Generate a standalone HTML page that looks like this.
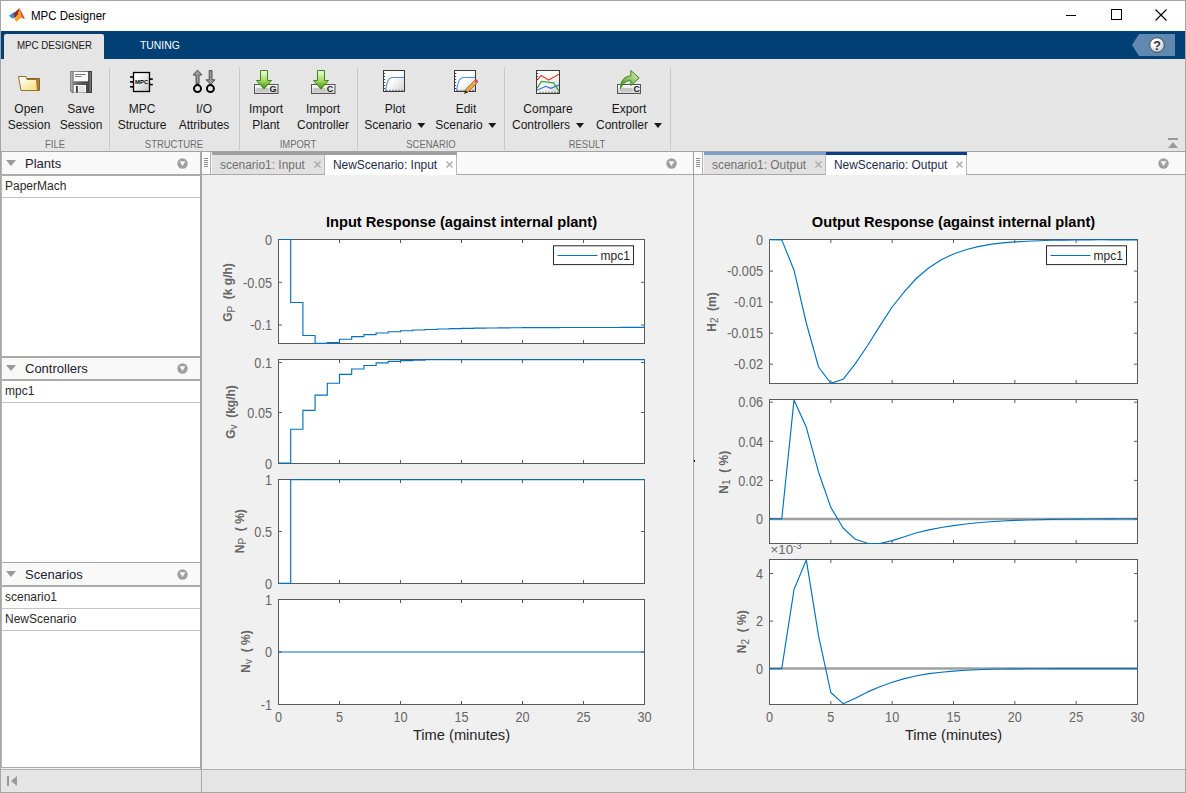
<!DOCTYPE html><html><head><meta charset="utf-8"><style>
*{margin:0;padding:0;box-sizing:border-box}
html,body{width:1186px;height:793px;overflow:hidden;background:#f0f0f0;font-family:"Liberation Sans",sans-serif;position:relative}
.a{position:absolute}
.t{position:absolute;white-space:nowrap;line-height:1}
</style></head><body>

<div class="a" style="left:0;top:0;width:1186px;height:793px;border:1px solid #a6a6a6"></div>
<div class="a" style="left:1px;top:1px;width:1184px;height:30px;background:#fff"></div>
<svg class="a" style="left:6px;top:5px" width="22" height="20" viewBox="6 5 22 20">
<defs><linearGradient id="mo" x1="0" y1="0" x2="0" y2="1"><stop offset="0" stop-color="#e88a30"/><stop offset="1" stop-color="#f5b030"/></linearGradient></defs>
<polygon points="9,15.8 13.5,12.6 17,12.3 14.6,17.6 12,18.4" fill="#3a8ad2"/>
<polygon points="13.8,13.2 19.6,7.9 18.2,14.5 14.6,18.4" fill="#9a2a18"/>
<polygon points="19.6,7.9 18.2,14.5 14.3,18.3 16.1,22 21.6,17.4" fill="url(#mo)"/>
<polygon points="19.6,7.9 21.6,17.4 25,19.3 23,15" fill="#d4481e"/>
</svg>
<div class="t" style="left:30.5px;top:9.7px;font-size:12px;color:#000;transform-origin:0 0;transform:scaleX(0.96)">MPC Designer</div>
<div class="a" style="left:1066px;top:15px;width:10px;height:1px;background:#000"></div>
<div class="a" style="left:1111px;top:9px;width:11px;height:11px;border:1px solid #000"></div>
<svg class="a" style="left:1155px;top:9px" width="12" height="12" viewBox="0 0 12 12"><path d="M0.5,0.5L11.5,11.5M11.5,0.5L0.5,11.5" stroke="#000" stroke-width="1.1"/></svg>
<div class="a" style="left:1px;top:31px;width:1184px;height:28px;background:#023f74"></div>
<div class="a" style="left:4px;top:34px;width:100px;height:25px;background:#e5e5e5;border-radius:2px 2px 0 0"></div>
<div class="t" style="left:16.5px;top:39.5px;font-size:10.8px;color:#1a1a1a;transform-origin:0 0;transform:scaleX(0.9)">MPC DESIGNER</div>
<div class="t" style="left:140px;top:39.5px;font-size:10.8px;color:#fff;transform-origin:0 0;transform:scaleX(0.96)">TUNING</div>
<svg class="a" style="left:1130px;top:33px" width="48" height="25" viewBox="1130 33 48 25">
<defs><radialGradient id="hq" cx="0.4" cy="0.35" r="0.7"><stop offset="0.3" stop-color="#ffffff"/><stop offset="1" stop-color="#b8c0c8"/></radialGradient></defs>
<polygon points="1132,45 1139,34 1175,34 1175,56 1139,56" fill="#6189b0"/>
<circle cx="1157" cy="45" r="7.3" fill="url(#hq)" stroke="#2a3a50" stroke-width="0.8"/>
<text x="1157" y="49.6" font-family="Liberation Sans" font-weight="bold" font-size="12.5" text-anchor="middle" fill="#2a3040">?</text>
</svg>
<div class="a" style="left:1px;top:59px;width:1184px;height:92px;background:#e5e5e5"></div>
<div class="a" style="left:1px;top:151px;width:1184px;height:1px;background:#a2a2a2"></div>
<div class="a" style="left:109px;top:67px;width:1px;height:83px;background:#c8c8c8"></div>
<div class="a" style="left:239px;top:67px;width:1px;height:83px;background:#c8c8c8"></div>
<div class="a" style="left:357px;top:67px;width:1px;height:83px;background:#c8c8c8"></div>
<div class="a" style="left:504px;top:67px;width:1px;height:83px;background:#c8c8c8"></div>
<div class="a" style="left:670px;top:67px;width:1px;height:83px;background:#c8c8c8"></div>
<div class="t" style="left:29px;top:103px;width:0;font-size:12px;color:#1a1a1a"><span style="position:absolute;left:0;transform:translateX(-50%) scaleX(1)">Open</span></div>
<div class="t" style="left:29px;top:119px;width:0;font-size:12px;color:#1a1a1a"><span style="position:absolute;left:0;transform:translateX(-50%) scaleX(1)">Session</span></div>
<div class="t" style="left:81px;top:103px;width:0;font-size:12px;color:#1a1a1a"><span style="position:absolute;left:0;transform:translateX(-50%) scaleX(1)">Save</span></div>
<div class="t" style="left:81px;top:119px;width:0;font-size:12px;color:#1a1a1a"><span style="position:absolute;left:0;transform:translateX(-50%) scaleX(1)">Session</span></div>
<div class="t" style="left:142px;top:103px;width:0;font-size:12px;color:#1a1a1a"><span style="position:absolute;left:0;transform:translateX(-50%) scaleX(1)">MPC</span></div>
<div class="t" style="left:142px;top:119px;width:0;font-size:12px;color:#1a1a1a"><span style="position:absolute;left:0;transform:translateX(-50%) scaleX(1)">Structure</span></div>
<div class="t" style="left:204px;top:103px;width:0;font-size:12px;color:#1a1a1a"><span style="position:absolute;left:0;transform:translateX(-50%) scaleX(1)">I/O</span></div>
<div class="t" style="left:204px;top:119px;width:0;font-size:12px;color:#1a1a1a"><span style="position:absolute;left:0;transform:translateX(-50%) scaleX(1)">Attributes</span></div>
<div class="t" style="left:266px;top:103px;width:0;font-size:12px;color:#1a1a1a"><span style="position:absolute;left:0;transform:translateX(-50%) scaleX(1)">Import</span></div>
<div class="t" style="left:266px;top:119px;width:0;font-size:12px;color:#1a1a1a"><span style="position:absolute;left:0;transform:translateX(-50%) scaleX(1)">Plant</span></div>
<div class="t" style="left:323px;top:103px;width:0;font-size:12px;color:#1a1a1a"><span style="position:absolute;left:0;transform:translateX(-50%) scaleX(1)">Import</span></div>
<div class="t" style="left:323px;top:119px;width:0;font-size:12px;color:#1a1a1a"><span style="position:absolute;left:0;transform:translateX(-50%) scaleX(1)">Controller</span></div>
<div class="t" style="left:395px;top:103px;width:0;font-size:12px;color:#1a1a1a"><span style="position:absolute;left:0;transform:translateX(-50%) scaleX(1)">Plot</span></div>
<div class="t" style="left:395px;top:119px;width:0;font-size:12px;color:#1a1a1a"><span style="position:absolute;left:0;transform:translateX(-50%) scaleX(1)">Scenario<span style="display:inline-block;width:0;height:0;border-left:4.5px solid transparent;border-right:4.5px solid transparent;border-top:5px solid #1a1a1a;vertical-align:1px;margin-left:6px"></span></span></div>
<div class="t" style="left:466px;top:103px;width:0;font-size:12px;color:#1a1a1a"><span style="position:absolute;left:0;transform:translateX(-50%) scaleX(1)">Edit</span></div>
<div class="t" style="left:466px;top:119px;width:0;font-size:12px;color:#1a1a1a"><span style="position:absolute;left:0;transform:translateX(-50%) scaleX(1)">Scenario<span style="display:inline-block;width:0;height:0;border-left:4.5px solid transparent;border-right:4.5px solid transparent;border-top:5px solid #1a1a1a;vertical-align:1px;margin-left:6px"></span></span></div>
<div class="t" style="left:548px;top:103px;width:0;font-size:12px;color:#1a1a1a"><span style="position:absolute;left:0;transform:translateX(-50%) scaleX(1)">Compare</span></div>
<div class="t" style="left:548px;top:119px;width:0;font-size:12px;color:#1a1a1a"><span style="position:absolute;left:0;transform:translateX(-50%) scaleX(1)">Controllers<span style="display:inline-block;width:0;height:0;border-left:4.5px solid transparent;border-right:4.5px solid transparent;border-top:5px solid #1a1a1a;vertical-align:1px;margin-left:6px"></span></span></div>
<div class="t" style="left:629px;top:103px;width:0;font-size:12px;color:#1a1a1a"><span style="position:absolute;left:0;transform:translateX(-50%) scaleX(1)">Export</span></div>
<div class="t" style="left:629px;top:119px;width:0;font-size:12px;color:#1a1a1a"><span style="position:absolute;left:0;transform:translateX(-50%) scaleX(1)">Controller<span style="display:inline-block;width:0;height:0;border-left:4.5px solid transparent;border-right:4.5px solid transparent;border-top:5px solid #1a1a1a;vertical-align:1px;margin-left:6px"></span></span></div>
<div class="t" style="left:55px;top:138.7px;width:0;font-size:10.5px;color:#6e6e6e"><span style="position:absolute;left:0;transform:translateX(-50%) scaleX(0.9)">FILE</span></div>
<div class="t" style="left:174px;top:138.7px;width:0;font-size:10.5px;color:#6e6e6e"><span style="position:absolute;left:0;transform:translateX(-50%) scaleX(0.9)">STRUCTURE</span></div>
<div class="t" style="left:298px;top:138.7px;width:0;font-size:10.5px;color:#6e6e6e"><span style="position:absolute;left:0;transform:translateX(-50%) scaleX(0.9)">IMPORT</span></div>
<div class="t" style="left:431px;top:138.7px;width:0;font-size:10.5px;color:#6e6e6e"><span style="position:absolute;left:0;transform:translateX(-50%) scaleX(0.9)">SCENARIO</span></div>
<div class="t" style="left:587px;top:138.7px;width:0;font-size:10.5px;color:#6e6e6e"><span style="position:absolute;left:0;transform:translateX(-50%) scaleX(0.9)">RESULT</span></div>
<svg class="a" style="left:17px;top:75px" width="24" height="17" viewBox="17 75 24 17">
<defs><linearGradient id="fg" x1="0" y1="0" x2="1" y2="1"><stop offset="0.15" stop-color="#ffffff"/><stop offset="1" stop-color="#f2dc6a"/></linearGradient>
<linearGradient id="fb" x1="0" y1="0" x2="1" y2="0"><stop offset="0" stop-color="#e0c090"/><stop offset="1" stop-color="#a07840"/></linearGradient></defs>
<path d="M26.5,78.5 H39.5 V90.5 H27z" fill="url(#fb)" stroke="#8a6424" stroke-width="1"/>
<path d="M18.5,76.5 H26 L27,79.5 H36.5 L37.5,90.5 H21z" fill="url(#fg)" stroke="#9a7020" stroke-width="1"/>
</svg>
<svg class="a" style="left:70px;top:71px" width="22" height="22" viewBox="70 71 22 22">
<defs><linearGradient id="fl" x1="0" y1="0" x2="1" y2="0"><stop offset="0" stop-color="#8a8a8a"/><stop offset="0.5" stop-color="#5a5a5a"/><stop offset="1" stop-color="#3a3a3a"/></linearGradient></defs>
<path d="M70,71 H92 V93 H72 L70,91z" fill="url(#fl)"/>
<rect x="71" y="72" width="1.5" height="19" fill="#a8a8a8"/><rect x="89.5" y="72" width="1.5" height="20" fill="#777"/>
<rect x="73.7" y="71.8" width="14.4" height="9.5" fill="#fafafa"/>
<rect x="75" y="74" width="10.5" height="0.9" fill="#666"/><rect x="75" y="76" width="6.5" height="0.9" fill="#666"/>
<rect x="73.7" y="85" width="12.3" height="7.5" fill="#fafafa"/><rect x="79" y="86" width="6" height="6" fill="#e4e4e4"/>
<rect x="76" y="86" width="1.8" height="6.5" fill="#333"/>
</svg>
<svg class="a" style="left:128px;top:70px" width="27" height="24" viewBox="128 70 27 24">
<defs><linearGradient id="cg" x1="0" y1="0" x2="1" y2="1"><stop offset="0.2" stop-color="#fff"/><stop offset="1" stop-color="#c4c4c4"/></linearGradient></defs>
<rect x="133.5" y="72.5" width="16" height="19" fill="url(#cg)" stroke="#000" stroke-width="1.3"/>
<rect x="130" y="76.2" width="3.2" height="1.6" fill="#000"/><rect x="130" y="81.1" width="3.2" height="1.6" fill="#000"/><rect x="130" y="86" width="3.2" height="1.6" fill="#000"/>
<rect x="149.8" y="78.3" width="3" height="1.6" fill="#000"/><rect x="149.8" y="83.8" width="3" height="1.6" fill="#000"/>
<text x="135" y="84.2" font-family="Liberation Sans" font-weight="bold" font-size="5.6" textLength="13.2" lengthAdjust="spacingAndGlyphs" fill="#000">MPC</text>
</svg>
<svg class="a" style="left:190px;top:68px" width="28" height="27" viewBox="190 68 28 27">
<path d="M196,83.5 V75 H193 L197.5,70 L202,75 H199 V83.5z" fill="#9a9a9a" stroke="#444" stroke-width="0.9"/>
<path d="M209.2,70.5 H212 V79.8 H215 L210.6,84.4 L206.2,79.8 H209.2z" fill="#9a9a9a" stroke="#444" stroke-width="0.9"/>
<circle cx="197.5" cy="88.6" r="3.5" fill="none" stroke="#000" stroke-width="2"/>
<circle cx="210.4" cy="88.6" r="3.5" fill="none" stroke="#000" stroke-width="2"/>
</svg>
<svg class="a" style="left:254px;top:70px" width="25" height="25" viewBox="0 0 25 25">
<defs><linearGradient id="agG" x1="0" y1="0" x2="0" y2="1"><stop offset="0" stop-color="#f4fce0"/><stop offset=".55" stop-color="#a8d860"/><stop offset="1" stop-color="#3a8a18"/></linearGradient>
<linearGradient id="bgG" x1="0" y1="0" x2="0" y2="1"><stop offset="0" stop-color="#fff"/><stop offset="1" stop-color="#ccc"/></linearGradient></defs>
<rect x="0.5" y="14.5" width="23.5" height="9" fill="url(#bgG)" stroke="#555" stroke-width="1"/>
<rect x="2.5" y="18" width="12" height="3.5" fill="#c4c4c4"/>
<path d="M6.5,0.5 h7 v10 h4 l-7.5,8.5 l-7.5,-8.5 h4z" fill="url(#agG)" stroke="#3a8a18" stroke-width="1"/>
<text x="19" y="22.3" font-family="Liberation Sans" font-weight="bold" font-size="9" text-anchor="middle" fill="#1a1a1a">G</text>
</svg>
<svg class="a" style="left:311px;top:70px" width="25" height="25" viewBox="0 0 25 25">
<defs><linearGradient id="agC" x1="0" y1="0" x2="0" y2="1"><stop offset="0" stop-color="#f4fce0"/><stop offset=".55" stop-color="#a8d860"/><stop offset="1" stop-color="#3a8a18"/></linearGradient>
<linearGradient id="bgC" x1="0" y1="0" x2="0" y2="1"><stop offset="0" stop-color="#fff"/><stop offset="1" stop-color="#ccc"/></linearGradient></defs>
<rect x="0.5" y="14.5" width="23.5" height="9" fill="url(#bgC)" stroke="#555" stroke-width="1"/>
<rect x="2.5" y="18" width="12" height="3.5" fill="#c4c4c4"/>
<path d="M6.5,0.5 h7 v10 h4 l-7.5,8.5 l-7.5,-8.5 h4z" fill="url(#agC)" stroke="#3a8a18" stroke-width="1"/>
<text x="19" y="22.3" font-family="Liberation Sans" font-weight="bold" font-size="9" text-anchor="middle" fill="#1a1a1a">C</text>
</svg>
<svg class="a" style="left:382px;top:70px" width="26" height="24" viewBox="0 0 26 24">
<defs><linearGradient id="pg382" x1="0" y1="0" x2="1" y2="1"><stop offset=".45" stop-color="#fff"/><stop offset="1" stop-color="#cfcfcf"/></linearGradient></defs>
<rect x="1.5" y="0.5" width="21" height="21" fill="url(#pg382)" stroke="#3a3a3a" stroke-width="1"/>
<path d="M3.5,21 C5,12 6,7.5 11,7.5 L22,7.5" fill="none" stroke="#4a90d8" stroke-width="1.1"/>
<path d="M2,3.5h1.2M2,6.5h1.2M2,9.5h1.2M2,12.5h1.2M2,15.5h1.2M2,18.5h1.2M5,21v-1.2M8,21v-1.2M11,21v-1.2M14,21v-1.2M17,21v-1.2M20,21v-1.2" stroke="#333" stroke-width="0.9"/></svg>
<svg class="a" style="left:453px;top:70px" width="26" height="24" viewBox="0 0 26 24">
<defs><linearGradient id="pg453" x1="0" y1="0" x2="1" y2="1"><stop offset=".45" stop-color="#fff"/><stop offset="1" stop-color="#cfcfcf"/></linearGradient></defs>
<rect x="1.5" y="0.5" width="21" height="21" fill="url(#pg453)" stroke="#3a3a3a" stroke-width="1"/>
<path d="M3.5,21 C5,12 6,7.5 11,7.5 L22,7.5" fill="none" stroke="#4a90d8" stroke-width="1.1"/>
<path d="M2,3.5h1.2M2,6.5h1.2M2,9.5h1.2M2,12.5h1.2M2,15.5h1.2M2,18.5h1.2M5,21v-1.2M8,21v-1.2M11,21v-1.2M14,21v-1.2M17,21v-1.2M20,21v-1.2" stroke="#333" stroke-width="0.9"/><path d="M11.5,23.5 L13,19 L21.5,10.5 L24,13 L15.5,21.5z" fill="#e8a848" stroke="#8a5a20" stroke-width="0.7"/><path d="M21.5,10.5 L23,9 L25.5,11.5 L24,13z" fill="#d84078"/><path d="M11.5,23.5 L12.6,20.2 L14.8,22.4z" fill="#222"/></svg>
<svg class="a" style="left:534px;top:68px" width="28" height="28" viewBox="534 68 28 28">
<defs><linearGradient id="cmp" x1="0" y1="0" x2="1" y2="1"><stop offset=".45" stop-color="#fff"/><stop offset="1" stop-color="#cfcfcf"/></linearGradient></defs>
<rect x="536.5" y="70.5" width="23" height="23" fill="url(#cmp)" stroke="#3a3a3a" stroke-width="1"/>
<polyline points="537,80.1 541.2,75.6 548.6,80.1 559,74.3" fill="none" stroke="#e83a2a" stroke-width="1.2"/>
<polyline points="537,88.3 541.4,81.5 553.5,82.8 559,91" fill="none" stroke="#30a040" stroke-width="1.2"/>
<polyline points="537,90.3 545.8,86.3 550.8,88.3 559,85" fill="none" stroke="#2f6fd0" stroke-width="1.2"/>
<path d="M537,73.5h1.2M537,76.5h1.2M537,79.5h1.2M540,93v-1.2M543,93v-1.2M546,93v-1.2M549,93v-1.2M552,93v-1.2M555,93v-1.2M558,93v-1.2" stroke="#333" stroke-width="0.9"/>
</svg>
<svg class="a" style="left:615px;top:68px" width="28" height="28" viewBox="615 68 28 28">
<defs><linearGradient id="eg" x1="0" y1="0" x2="0" y2="1"><stop offset="0" stop-color="#fff"/><stop offset="1" stop-color="#cfcfcf"/></linearGradient>
<linearGradient id="eag" x1="1" y1="0" x2="0" y2="1"><stop offset="0" stop-color="#e8f8c0"/><stop offset="1" stop-color="#3a8a18"/></linearGradient></defs>
<rect x="617.5" y="84.5" width="23" height="9" fill="url(#eg)" stroke="#555" stroke-width="1"/>
<rect x="619.5" y="88" width="13" height="3.5" fill="#c4c4c4"/>
<path d="M620.5,88.5 C620.5,80 625,76 630.8,76 V70.5 L639.2,78 L630.8,85.5 V80.5 C626.5,80.5 623,83 620.5,88.5z" fill="url(#eag)" stroke="#3a8a18" stroke-width="1"/>
<text x="636.6" y="92" font-family="Liberation Sans" font-weight="bold" font-size="8.8" text-anchor="middle" fill="#1a1a1a">C</text>
</svg>
<div class="a" style="left:1168px;top:138px;width:10px;height:1.5px;background:#999"></div>
<svg class="a" style="left:1168px;top:141px" width="10" height="8"><polygon points="0,7 5,1 10,7" fill="#999"/></svg>
<div class="a" style="left:1px;top:152px;width:200px;height:22px;background:#f9f9f9"></div>
<svg class="a" style="left:6px;top:159.5px" width="10" height="7"><polygon points="0,0 10,0 5,6" fill="#999"/></svg>
<div class="t" style="left:25px;top:156.5px;font-size:13px;color:#1c2230">Plants</div>
<svg class="a" style="left:177px;top:157.5px" width="11" height="11" viewBox="0 0 11 11"><circle cx="5.5" cy="5.5" r="5.2" fill="#a0a0a0"/><polygon points="2.6,3.3 8.4,3.3 5.5,8" fill="#f9f9f9"/></svg>
<div class="a" style="left:1px;top:174px;width:200px;height:2px;background:#ababab"></div>
<div class="a" style="left:1px;top:176px;width:199px;height:180px;background:#fff"></div>
<div class="t" style="left:5px;top:180px;font-size:12px;color:#2a2a2a">PaperMach</div>
<div class="a" style="left:1px;top:197px;width:199px;height:1px;background:#c4c4c4"></div>
<div class="a" style="left:1px;top:356px;width:200px;height:2px;background:#a8a8a8"></div>
<div class="a" style="left:1px;top:358px;width:200px;height:21px;background:#f9f9f9"></div>
<svg class="a" style="left:6px;top:365px" width="10" height="7"><polygon points="0,0 10,0 5,6" fill="#999"/></svg>
<div class="t" style="left:25px;top:362px;font-size:13px;color:#1c2230">Controllers</div>
<svg class="a" style="left:177px;top:363px" width="11" height="11" viewBox="0 0 11 11"><circle cx="5.5" cy="5.5" r="5.2" fill="#a0a0a0"/><polygon points="2.6,3.3 8.4,3.3 5.5,8" fill="#f9f9f9"/></svg>
<div class="a" style="left:1px;top:379px;width:200px;height:2px;background:#ababab"></div>
<div class="a" style="left:1px;top:381px;width:199px;height:181px;background:#fff"></div>
<div class="t" style="left:5px;top:385px;font-size:12px;color:#2a2a2a">mpc1</div>
<div class="a" style="left:1px;top:402px;width:199px;height:1px;background:#c4c4c4"></div>
<div class="a" style="left:1px;top:562px;width:200px;height:1px;background:#a8a8a8"></div>
<div class="a" style="left:1px;top:563px;width:200px;height:22px;background:#f9f9f9"></div>
<svg class="a" style="left:6px;top:570.5px" width="10" height="7"><polygon points="0,0 10,0 5,6" fill="#999"/></svg>
<div class="t" style="left:25px;top:567.5px;font-size:13px;color:#1c2230">Scenarios</div>
<svg class="a" style="left:177px;top:568.5px" width="11" height="11" viewBox="0 0 11 11"><circle cx="5.5" cy="5.5" r="5.2" fill="#a0a0a0"/><polygon points="2.6,3.3 8.4,3.3 5.5,8" fill="#f9f9f9"/></svg>
<div class="a" style="left:1px;top:585px;width:200px;height:2px;background:#ababab"></div>
<div class="a" style="left:1px;top:587px;width:199px;height:180px;background:#fff"></div>
<div class="t" style="left:5px;top:591px;font-size:12px;color:#2a2a2a">scenario1</div>
<div class="a" style="left:1px;top:608px;width:199px;height:1px;background:#c4c4c4"></div>
<div class="t" style="left:5px;top:613px;font-size:12px;color:#2a2a2a">NewScenario</div>
<div class="a" style="left:1px;top:630px;width:199px;height:1px;background:#c4c4c4"></div>
<div class="a" style="left:1px;top:767px;width:200px;height:1px;background:#a8a8a8"></div>
<div class="a" style="left:200px;top:152px;width:2px;height:617px;background:#a8a8a8"></div>
<div class="a" style="left:1px;top:152px;width:1px;height:616px;background:#b4b4b4"></div>
<div class="a" style="left:1px;top:769px;width:1184px;height:1px;background:#b0b0b0"></div>
<div class="a" style="left:1px;top:770px;width:1184px;height:22px;background:#e5e5e5"></div>
<div class="a" style="left:201px;top:770px;width:1px;height:22px;background:#a8a8a8"></div>
<svg class="a" style="left:7px;top:776px" width="11" height="10"><rect x="0" y="0" width="2" height="10" fill="#999"/><polygon points="4,5 10,0 10,10" fill="#999"/></svg>
<div class="a" style="left:202px;top:152px;width:491px;height:22px;background:#f9f9f9"></div>
<div class="a" style="left:202px;top:174px;width:491px;height:1px;background:#a8a8a8"></div>
<div class="a" style="left:202px;top:152px;width:9px;height:22px;background:#fcfcfc;border-right:1px solid #b0b0b0"></div>
<div class="a" style="left:204px;top:158px;width:4px;height:1px;background:#8a8a8a"></div>
<div class="a" style="left:204px;top:160px;width:4px;height:1px;background:#8a8a8a"></div>
<div class="a" style="left:204px;top:162px;width:4px;height:1px;background:#8a8a8a"></div>
<div class="a" style="left:204px;top:164px;width:4px;height:1px;background:#8a8a8a"></div>
<div class="a" style="left:204px;top:166px;width:4px;height:1px;background:#8a8a8a"></div>
<div class="a" style="left:212px;top:152px;width:113px;height:22px;background:#e1e1e1;border-right:1px solid #b8b8b8"></div>
<div class="a" style="left:212px;top:152px;width:113px;height:3px;background:#a0a0a0"></div>
<div class="t" style="left:220px;top:159px;font-size:12.3px;color:#707070;transform-origin:0 0;transform:scaleX(0.97)">scenario1: Input</div>
<svg class="a" style="left:314px;top:160.5px" width="7" height="7"><path d="M0.5,0.5L6.5,6.5M6.5,0.5L0.5,6.5" stroke="#a4a4a4" stroke-width="1.15"/></svg>
<div class="a" style="left:325px;top:152px;width:132px;height:23px;background:#fff;border-right:1px solid #b8b8b8"></div>
<div class="a" style="left:325px;top:152px;width:132px;height:3px;background:#a0a0a0"></div>
<div class="t" style="left:333px;top:159px;font-size:12.3px;color:#1d2a4a;transform-origin:0 0;transform:scaleX(0.97)">NewScenario: Input</div>
<svg class="a" style="left:446px;top:160.5px" width="7" height="7"><path d="M0.5,0.5L6.5,6.5M6.5,0.5L0.5,6.5" stroke="#a4a4a4" stroke-width="1.15"/></svg>
<svg class="a" style="left:666px;top:158px" width="11" height="11" viewBox="0 0 11 11"><circle cx="5.5" cy="5.5" r="5.2" fill="#a0a0a0"/><polygon points="2.6,3.3 8.4,3.3 5.5,8" fill="#f9f9f9"/></svg>
<div class="a" style="left:692px;top:175px;width:1px;height:594px;background:#fafafa"></div>
<div class="a" style="left:693px;top:152px;width:1px;height:617px;background:#a0a0a0"></div>
<div class="a" style="left:694px;top:460px;width:1px;height:2px;background:#000"></div>
<div class="a" style="left:694px;top:152px;width:491px;height:22px;background:#f9f9f9"></div>
<div class="a" style="left:694px;top:174px;width:491px;height:1px;background:#a8a8a8"></div>
<div class="a" style="left:694px;top:152px;width:9px;height:22px;background:#fcfcfc;border-right:1px solid #b0b0b0"></div>
<div class="a" style="left:696px;top:158px;width:4px;height:1px;background:#8a8a8a"></div>
<div class="a" style="left:696px;top:160px;width:4px;height:1px;background:#8a8a8a"></div>
<div class="a" style="left:696px;top:162px;width:4px;height:1px;background:#8a8a8a"></div>
<div class="a" style="left:696px;top:164px;width:4px;height:1px;background:#8a8a8a"></div>
<div class="a" style="left:696px;top:166px;width:4px;height:1px;background:#8a8a8a"></div>
<div class="a" style="left:704px;top:152px;width:122px;height:22px;background:#e1e1e1;border-right:1px solid #b8b8b8"></div>
<div class="a" style="left:704px;top:152px;width:122px;height:3px;background:#7a9cc6"></div>
<div class="t" style="left:712px;top:159px;font-size:12.3px;color:#707070;transform-origin:0 0;transform:scaleX(0.97)">scenario1: Output</div>
<svg class="a" style="left:815px;top:160.5px" width="7" height="7"><path d="M0.5,0.5L6.5,6.5M6.5,0.5L0.5,6.5" stroke="#a4a4a4" stroke-width="1.15"/></svg>
<div class="a" style="left:826px;top:152px;width:141px;height:23px;background:#fff;border-right:1px solid #b8b8b8"></div>
<div class="a" style="left:826px;top:152px;width:141px;height:3px;background:#0a3d8a"></div>
<div class="t" style="left:834px;top:159px;font-size:12.3px;color:#1d2a4a;transform-origin:0 0;transform:scaleX(0.97)">NewScenario: Output</div>
<svg class="a" style="left:956px;top:160.5px" width="7" height="7"><path d="M0.5,0.5L6.5,6.5M6.5,0.5L0.5,6.5" stroke="#a4a4a4" stroke-width="1.15"/></svg>
<svg class="a" style="left:1158px;top:158px" width="11" height="11" viewBox="0 0 11 11"><circle cx="5.5" cy="5.5" r="5.2" fill="#a0a0a0"/><polygon points="2.6,3.3 8.4,3.3 5.5,8" fill="#f9f9f9"/></svg>
<svg class="a" style="left:0;top:0" width="1186" height="793" viewBox="0 0 1186 793">
<defs><clipPath id="cA1"><rect x="278.5" y="239.5" width="366" height="104"/></clipPath></defs>
<g font-family="Liberation Sans, sans-serif">
<rect x="278.5" y="239.5" width="366" height="104" fill="#fff"/>
<path d="M278.5,239.5v3.5M278.5,343.5v-3.5M339.5,239.5v3.5M339.5,343.5v-3.5M400.5,239.5v3.5M400.5,343.5v-3.5M461.5,239.5v3.5M461.5,343.5v-3.5M522.5,239.5v3.5M522.5,343.5v-3.5M583.5,239.5v3.5M583.5,343.5v-3.5M644.5,239.5v3.5M644.5,343.5v-3.5M278.5,239.5h3.5M644.5,239.5h-3.5M278.5,282.3h3.5M644.5,282.3h-3.5M278.5,325h3.5M644.5,325h-3.5" stroke="#5a5a5a" stroke-width="1" fill="none"/>
<rect x="278.5" y="239.5" width="366" height="104" fill="none" stroke="#5a5a5a" stroke-width="1"/>
<polyline points="279,239.5 290.7,239.5 290.7,302.5 302.9,302.5 302.9,335.5 315.1,335.5 315.1,343.3 327.3,343.3 327.3,342.6 339.5,342.6 339.5,339.21 351.7,339.21 351.7,336.6 363.9,336.6 363.9,334.56 376.1,334.56 376.1,332.98 388.3,332.98 388.3,331.74 400.5,331.74 400.5,330.78 412.7,330.78 412.7,330.03 424.9,330.03 424.9,329.45 437.1,329.45 437.1,329 449.3,329 449.3,328.64 461.5,328.64 461.5,328.37 473.7,328.37 473.7,328.15 485.9,328.15 485.9,327.99 498.1,327.99 498.1,327.86 510.3,327.86 510.3,327.76 522.5,327.76 522.5,327.68 534.7,327.68 534.7,327.62 546.9,327.62 546.9,327.57 559.1,327.57 559.1,327.53 571.3,327.53 571.3,327.5 583.5,327.5 583.5,327.48 595.7,327.48 595.7,327.46 607.9,327.46 607.9,327.45 620.1,327.45 620.1,327.44 632.3,327.44 632.3,327.43 644.5,327.43" fill="none" stroke="#0072bd" stroke-width="1.15"/>
<text transform="translate(272,244.7) scale(0.92,1)" text-anchor="end" font-size="13.8" fill="#666666">0</text>
<text transform="translate(272,287.5) scale(0.92,1)" text-anchor="end" font-size="13.8" fill="#666666">-0.05</text>
<text transform="translate(272,330.2) scale(0.92,1)" text-anchor="end" font-size="13.8" fill="#666666">-0.1</text>
<text transform="translate(232,292.5) rotate(-90)" text-anchor="middle" font-size="12" font-weight="bold" fill="#666666" xml:space="preserve">G<tspan font-weight="normal" font-size="10" dy="2.5">P</tspan><tspan dy="-2.5">  (k g/h)</tspan></text>
<rect x="278.5" y="359.5" width="366" height="104" fill="#fff"/>
<path d="M278.5,359.5v3.5M278.5,463.5v-3.5M339.5,359.5v3.5M339.5,463.5v-3.5M400.5,359.5v3.5M400.5,463.5v-3.5M461.5,359.5v3.5M461.5,463.5v-3.5M522.5,359.5v3.5M522.5,463.5v-3.5M583.5,359.5v3.5M583.5,463.5v-3.5M644.5,359.5v3.5M644.5,463.5v-3.5M278.5,362.6h3.5M644.5,362.6h-3.5M278.5,412.5h3.5M644.5,412.5h-3.5M278.5,463.5h3.5M644.5,463.5h-3.5" stroke="#5a5a5a" stroke-width="1" fill="none"/>
<rect x="278.5" y="359.5" width="366" height="104" fill="none" stroke="#5a5a5a" stroke-width="1"/>
<polyline points="278.5,463.1 290.7,463.1 290.7,429.2 302.9,429.2 302.9,410.3 315.1,410.3 315.1,395.1 327.3,395.1 327.3,383.2 339.5,383.2 339.5,374.4 351.7,374.4 351.7,369 363.9,369 363.9,365.5 376.1,365.5 376.1,362.9 388.3,362.9 388.3,361.4 400.5,361.4 400.5,360.6 412.7,360.6 412.7,360.1 424.9,360.1 424.9,359.7 437.1,359.7 437.1,359.7 449.3,359.7 449.3,359.7 461.5,359.7 461.5,359.7 473.7,359.7 473.7,359.7 485.9,359.7 485.9,359.7 498.1,359.7 498.1,359.7 510.3,359.7 510.3,359.7 522.5,359.7 522.5,359.7 534.7,359.7 534.7,359.7 546.9,359.7 546.9,359.7 559.1,359.7 559.1,359.7 571.3,359.7 571.3,359.7 583.5,359.7 583.5,359.7 595.7,359.7 595.7,359.7 607.9,359.7 607.9,359.7 620.1,359.7 620.1,359.7 632.3,359.7 632.3,359.7 644.5,359.7" fill="none" stroke="#0072bd" stroke-width="1.15"/>
<text transform="translate(272,367.8) scale(0.92,1)" text-anchor="end" font-size="13.8" fill="#666666">0.1</text>
<text transform="translate(272,417.7) scale(0.92,1)" text-anchor="end" font-size="13.8" fill="#666666">0.05</text>
<text transform="translate(272,468.7) scale(0.92,1)" text-anchor="end" font-size="13.8" fill="#666666">0</text>
<text transform="translate(234.5,412) rotate(-90)" text-anchor="middle" font-size="12" font-weight="bold" fill="#666666" xml:space="preserve">G<tspan font-weight="normal" font-size="10" dy="2.5">v</tspan><tspan dy="-2.5">  (kg/h)</tspan></text>
<rect x="278.5" y="479.5" width="366" height="104" fill="#fff"/>
<path d="M278.5,479.5v3.5M278.5,583.5v-3.5M339.5,479.5v3.5M339.5,583.5v-3.5M400.5,479.5v3.5M400.5,583.5v-3.5M461.5,479.5v3.5M461.5,583.5v-3.5M522.5,479.5v3.5M522.5,583.5v-3.5M583.5,479.5v3.5M583.5,583.5v-3.5M644.5,479.5v3.5M644.5,583.5v-3.5M278.5,479.5h3.5M644.5,479.5h-3.5M278.5,531.5h3.5M644.5,531.5h-3.5M278.5,583.5h3.5M644.5,583.5h-3.5" stroke="#5a5a5a" stroke-width="1" fill="none"/>
<rect x="278.5" y="479.5" width="366" height="104" fill="none" stroke="#5a5a5a" stroke-width="1"/>
<polyline points="278.5,583.3 290.7,583.3 290.7,479.7 644.5,479.7" fill="none" stroke="#0072bd" stroke-width="1.15"/>
<text transform="translate(272,484.7) scale(0.92,1)" text-anchor="end" font-size="13.8" fill="#666666">1</text>
<text transform="translate(272,536.7) scale(0.92,1)" text-anchor="end" font-size="13.8" fill="#666666">0.5</text>
<text transform="translate(272,588.7) scale(0.92,1)" text-anchor="end" font-size="13.8" fill="#666666">0</text>
<text transform="translate(243.5,531.2) rotate(-90)" text-anchor="middle" font-size="12" font-weight="bold" fill="#666666" xml:space="preserve">N<tspan font-weight="normal" font-size="10" dy="2.5">P</tspan><tspan dy="-2.5">  ( %)</tspan></text>
<rect x="278.5" y="599.5" width="366" height="105" fill="#fff"/>
<path d="M278.5,599.5v3.5M278.5,704.5v-3.5M339.5,599.5v3.5M339.5,704.5v-3.5M400.5,599.5v3.5M400.5,704.5v-3.5M461.5,599.5v3.5M461.5,704.5v-3.5M522.5,599.5v3.5M522.5,704.5v-3.5M583.5,599.5v3.5M583.5,704.5v-3.5M644.5,599.5v3.5M644.5,704.5v-3.5M278.5,599.5h3.5M644.5,599.5h-3.5M278.5,652h3.5M644.5,652h-3.5M278.5,704.5h3.5M644.5,704.5h-3.5" stroke="#5a5a5a" stroke-width="1" fill="none"/>
<rect x="278.5" y="599.5" width="366" height="105" fill="none" stroke="#5a5a5a" stroke-width="1"/>
<line x1="278.5" y1="652" x2="644.5" y2="652" stroke="#0072bd" stroke-width="1.15"/>
<text transform="translate(272,604.7) scale(0.92,1)" text-anchor="end" font-size="13.8" fill="#666666">1</text>
<text transform="translate(272,657.2) scale(0.92,1)" text-anchor="end" font-size="13.8" fill="#666666">0</text>
<text transform="translate(272,709.7) scale(0.92,1)" text-anchor="end" font-size="13.8" fill="#666666">-1</text>
<text transform="translate(278.5,722) scale(0.92,1)" text-anchor="middle" font-size="13.8" fill="#666666">0</text>
<text transform="translate(339.5,722) scale(0.92,1)" text-anchor="middle" font-size="13.8" fill="#666666">5</text>
<text transform="translate(400.5,722) scale(0.92,1)" text-anchor="middle" font-size="13.8" fill="#666666">10</text>
<text transform="translate(461.5,722) scale(0.92,1)" text-anchor="middle" font-size="13.8" fill="#666666">15</text>
<text transform="translate(522.5,722) scale(0.92,1)" text-anchor="middle" font-size="13.8" fill="#666666">20</text>
<text transform="translate(583.5,722) scale(0.92,1)" text-anchor="middle" font-size="13.8" fill="#666666">25</text>
<text transform="translate(644.5,722) scale(0.92,1)" text-anchor="middle" font-size="13.8" fill="#666666">30</text>
<text transform="translate(249.5,651.5) rotate(-90)" text-anchor="middle" font-size="12" font-weight="bold" fill="#666666" xml:space="preserve">N<tspan font-weight="normal" font-size="10" dy="2.5">v</tspan><tspan dy="-2.5">  ( %)</tspan></text>
<rect x="769.5" y="239.5" width="368" height="144" fill="#fff"/>
<path d="M769.5,239.5v3.5M769.5,383.5v-3.5M830.83,239.5v3.5M830.83,383.5v-3.5M892.17,239.5v3.5M892.17,383.5v-3.5M953.5,239.5v3.5M953.5,383.5v-3.5M1014.83,239.5v3.5M1014.83,383.5v-3.5M1076.17,239.5v3.5M1076.17,383.5v-3.5M1137.5,239.5v3.5M1137.5,383.5v-3.5M769.5,239.5h3.5M1137.5,239.5h-3.5M769.5,271.1h3.5M1137.5,271.1h-3.5M769.5,302.1h3.5M1137.5,302.1h-3.5M769.5,333.2h3.5M1137.5,333.2h-3.5M769.5,364.2h3.5M1137.5,364.2h-3.5" stroke="#5a5a5a" stroke-width="1" fill="none"/>
<rect x="769.5" y="239.5" width="368" height="144" fill="none" stroke="#5a5a5a" stroke-width="1"/>
<polyline points="769.5,239.7 781.77,239.9 794.03,270.2 806.3,323 818.57,367 830.83,383.4 843.1,379.3 855.37,363.6 867.63,345.5 879.9,325.9 892.17,307 904.43,291.7 916.7,278 928.97,267.8 941.23,259.8 953.5,254 965.77,249.8 978.03,246.6 990.3,244.4 1002.57,242.9 1014.83,241.9 1027.1,241.2 1039.37,240.7 1051.63,240.3 1063.9,240.1 1076.17,240 1088.43,239.9 1100.7,239.8 1112.97,239.8 1125.23,239.8 1137.5,239.8" fill="none" stroke="#0072bd" stroke-width="1.15" stroke-linejoin="round"/>
<text transform="translate(763,244.7) scale(0.92,1)" text-anchor="end" font-size="13.8" fill="#666666">0</text>
<text transform="translate(763,276.3) scale(0.92,1)" text-anchor="end" font-size="13.8" fill="#666666">-0.005</text>
<text transform="translate(763,307.3) scale(0.92,1)" text-anchor="end" font-size="13.8" fill="#666666">-0.01</text>
<text transform="translate(763,338.4) scale(0.92,1)" text-anchor="end" font-size="13.8" fill="#666666">-0.015</text>
<text transform="translate(763,369.4) scale(0.92,1)" text-anchor="end" font-size="13.8" fill="#666666">-0.02</text>
<text transform="translate(715.5,312) rotate(-90)" text-anchor="middle" font-size="12" font-weight="bold" fill="#666666" xml:space="preserve">H<tspan font-weight="normal" font-size="10" dy="2.5">2</tspan><tspan dy="-2.5">  (m)</tspan></text>
<rect x="769.5" y="399.5" width="368" height="144" fill="#fff"/>
<line x1="769.5" y1="519" x2="1137.5" y2="519" stroke="#a0a0a0" stroke-width="2.5"/>
<path d="M769.5,399.5v3.5M769.5,543.5v-3.5M830.83,399.5v3.5M830.83,543.5v-3.5M892.17,399.5v3.5M892.17,543.5v-3.5M953.5,399.5v3.5M953.5,543.5v-3.5M1014.83,399.5v3.5M1014.83,543.5v-3.5M1076.17,399.5v3.5M1076.17,543.5v-3.5M1137.5,399.5v3.5M1137.5,543.5v-3.5M769.5,402.2h3.5M1137.5,402.2h-3.5M769.5,441.3h3.5M1137.5,441.3h-3.5M769.5,480.4h3.5M1137.5,480.4h-3.5M769.5,518.8h3.5M1137.5,518.8h-3.5" stroke="#5a5a5a" stroke-width="1" fill="none"/>
<rect x="769.5" y="399.5" width="368" height="144" fill="none" stroke="#5a5a5a" stroke-width="1"/>
<polyline points="769.5,518.8 781.77,518.8 794.03,399.9 806.3,427.3 818.57,472.2 830.83,507.4 843.1,528 855.37,539.3 867.63,543.2 879.9,543.5 892.17,540.6 904.43,536.7 916.7,532.8 928.97,529.9 941.23,527.5 953.5,525.6 965.77,524 978.03,522.7 990.3,521.7 1002.57,521 1014.83,520.4 1027.1,520 1039.37,519.7 1051.63,519.4 1063.9,519.2 1076.17,519.1 1088.43,519 1100.7,518.9 1112.97,518.9 1125.23,518.8 1137.5,518.8" fill="none" stroke="#0072bd" stroke-width="1.15" stroke-linejoin="round"/>
<text transform="translate(763,407.4) scale(0.92,1)" text-anchor="end" font-size="13.8" fill="#666666">0.06</text>
<text transform="translate(763,446.5) scale(0.92,1)" text-anchor="end" font-size="13.8" fill="#666666">0.04</text>
<text transform="translate(763,485.6) scale(0.92,1)" text-anchor="end" font-size="13.8" fill="#666666">0.02</text>
<text transform="translate(763,524) scale(0.92,1)" text-anchor="end" font-size="13.8" fill="#666666">0</text>
<text transform="translate(727.5,472.3) rotate(-90)" text-anchor="middle" font-size="12" font-weight="bold" fill="#666666" xml:space="preserve">N<tspan font-weight="normal" font-size="10" dy="2.5">1</tspan><tspan dy="-2.5">  ( %)</tspan></text>
<rect x="769.5" y="559.5" width="368" height="145" fill="#fff"/>
<line x1="769.5" y1="668.6" x2="1137.5" y2="668.6" stroke="#a0a0a0" stroke-width="2.5"/>
<path d="M769.5,559.5v3.5M769.5,704.5v-3.5M830.83,559.5v3.5M830.83,704.5v-3.5M892.17,559.5v3.5M892.17,704.5v-3.5M953.5,559.5v3.5M953.5,704.5v-3.5M1014.83,559.5v3.5M1014.83,704.5v-3.5M1076.17,559.5v3.5M1076.17,704.5v-3.5M1137.5,559.5v3.5M1137.5,704.5v-3.5M769.5,573.5h3.5M1137.5,573.5h-3.5M769.5,621.1h3.5M1137.5,621.1h-3.5M769.5,668.6h3.5M1137.5,668.6h-3.5" stroke="#5a5a5a" stroke-width="1" fill="none"/>
<rect x="769.5" y="559.5" width="368" height="145" fill="none" stroke="#5a5a5a" stroke-width="1"/>
<polyline points="769.5,668.6 781.77,668.6 794.03,589.5 806.3,559.9 818.57,635.9 830.83,692.5 843.1,703.7 855.37,698.3 867.63,691.9 879.9,686.7 892.17,682.3 904.43,678.6 916.7,675.7 928.97,673.6 941.23,672.2 953.5,671.1 965.77,670.3 978.03,669.7 990.3,669.3 1002.57,669 1014.83,668.9 1027.1,668.8 1039.37,668.7 1051.63,668.6 1063.9,668.6 1076.17,668.6 1088.43,668.6 1100.7,668.6 1112.97,668.6 1125.23,668.6 1137.5,668.6" fill="none" stroke="#0072bd" stroke-width="1.15" stroke-linejoin="round"/>
<text transform="translate(763,578.7) scale(0.92,1)" text-anchor="end" font-size="13.8" fill="#666666">4</text>
<text transform="translate(763,626.3) scale(0.92,1)" text-anchor="end" font-size="13.8" fill="#666666">2</text>
<text transform="translate(763,673.8) scale(0.92,1)" text-anchor="end" font-size="13.8" fill="#666666">0</text>
<text transform="translate(769.5,722) scale(0.92,1)" text-anchor="middle" font-size="13.8" fill="#666666">0</text>
<text transform="translate(830.83,722) scale(0.92,1)" text-anchor="middle" font-size="13.8" fill="#666666">5</text>
<text transform="translate(892.17,722) scale(0.92,1)" text-anchor="middle" font-size="13.8" fill="#666666">10</text>
<text transform="translate(953.5,722) scale(0.92,1)" text-anchor="middle" font-size="13.8" fill="#666666">15</text>
<text transform="translate(1014.83,722) scale(0.92,1)" text-anchor="middle" font-size="13.8" fill="#666666">20</text>
<text transform="translate(1076.17,722) scale(0.92,1)" text-anchor="middle" font-size="13.8" fill="#666666">25</text>
<text transform="translate(1137.5,722) scale(0.92,1)" text-anchor="middle" font-size="13.8" fill="#666666">30</text>
<text transform="translate(746,631.8) rotate(-90)" text-anchor="middle" font-size="12" font-weight="bold" fill="#666666" xml:space="preserve">N<tspan font-weight="normal" font-size="10" dy="2.5">2</tspan><tspan dy="-2.5">  ( %)</tspan></text>
<text x="770.5" y="554" font-size="13.33" fill="#666666">×10<tspan dy="-5" font-size="9.5">-3</tspan></text>
<text x="461.5" y="227" text-anchor="middle" font-size="14.67" font-weight="bold" fill="#000">Input Response (against internal plant)</text>
<text x="953.5" y="227" text-anchor="middle" font-size="14.67" font-weight="bold" fill="#000">Output Response (against internal plant)</text>
<text x="461.5" y="740" text-anchor="middle" font-size="14.67" fill="#262626">Time (minutes)</text>
<text x="953.5" y="740" text-anchor="middle" font-size="14.67" fill="#262626">Time (minutes)</text>
<rect x="553.5" y="245.8" width="80" height="18.8" fill="#fff" stroke="#262626" stroke-width="1"/>
<line x1="557.5" y1="255.5" x2="597.5" y2="255.5" stroke="#0072bd" stroke-width="1.15"/>
<text x="600.5" y="260" font-size="12" fill="#262626">mpc1</text>
<rect x="1046.5" y="245.8" width="80" height="18.8" fill="#fff" stroke="#262626" stroke-width="1"/>
<line x1="1050.5" y1="255.5" x2="1090.5" y2="255.5" stroke="#0072bd" stroke-width="1.15"/>
<text x="1093.5" y="260" font-size="12" fill="#262626">mpc1</text>
</g></svg>
</body></html>
